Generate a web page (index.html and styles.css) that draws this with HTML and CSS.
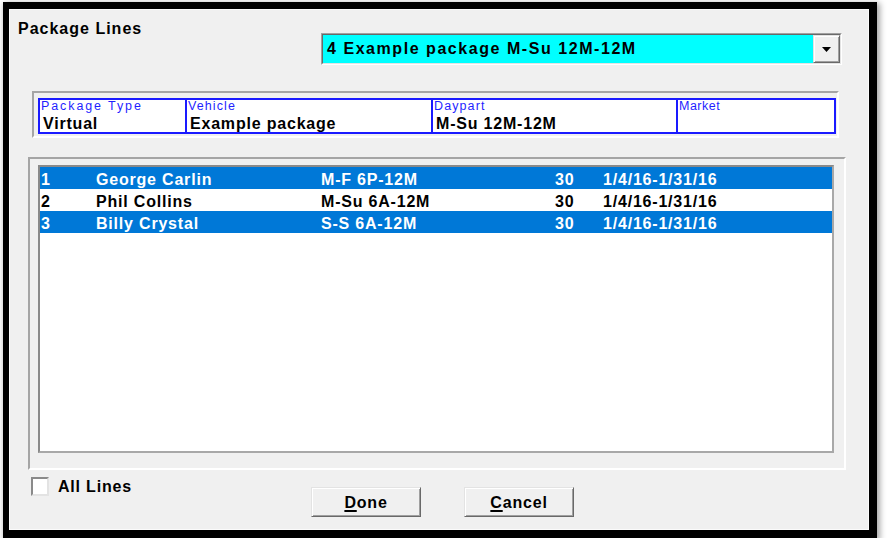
FILE: index.html
```html
<!DOCTYPE html>
<html>
<head>
<meta charset="utf-8">
<link rel="stylesheet" href="styles.css">
</head>
<body>
<div class="dialog">
  <div class="panel">
    <div class="top-row">
      <div class="title">Package Lines</div>
      <div class="combo">
        <div class="combo-inner">
          <div class="combo-text">4 Example package M-Su 12M-12M</div>
          <div class="combo-btn"><svg width="9" height="5" viewBox="0 0 9 5"><polygon points="0,0 9,0 4.5,5" fill="#000"/></svg></div>
        </div>
      </div>
    </div>
    <div class="info-frame">
      <div class="info-box">
        <div class="cell"><div class="lbl lbl-wide">Package Type</div><div class="val">Virtual</div></div>
        <div class="cell"><div class="lbl">Vehicle</div><div class="val">Example package</div></div>
        <div class="cell"><div class="lbl">Daypart</div><div class="val">M-Su 12M-12M</div></div>
        <div class="cell"><div class="lbl lbl-tight">Market</div><div class="val"></div></div>
      </div>
    </div>
    <div class="list-frame">
      <div class="list">
        <div class="row sel"><span>1</span><span>George Carlin</span><span>M-F 6P-12M</span><span>30</span><span>1/4/16-1/31/16</span></div>
        <div class="row"><span>2</span><span>Phil Collins</span><span>M-Su 6A-12M</span><span>30</span><span>1/4/16-1/31/16</span></div>
        <div class="row sel"><span>3</span><span>Billy Crystal</span><span>S-S 6A-12M</span><span>30</span><span>1/4/16-1/31/16</span></div>
      </div>
    </div>
    <div class="bottom-row">
      <div class="check"><span class="box"></span><span class="check-label">All Lines</span></div>
      <div class="buttons">
        <div class="btn"><u>D</u>one</div>
        <div class="btn"><u>C</u>ancel</div>
      </div>
    </div>
  </div>
</div>
</body>
</html>
```

FILE: styles.css
```css
html, body {
  margin: 0;
  padding: 0;
  background: #ffffff;
}

body {
  font-family: "Liberation Sans", Arial, sans-serif;
  font-weight: bold;
  font-size: 16px;
  letter-spacing: 0.8px;
  color: #000;
}

.dialog {
  box-sizing: border-box;
  width: 874px;
  height: 536px;
  margin: 2px 0 0 3px;
  border-style: solid;
  border-color: #000;
  border-width: 7px 8px 8px 6px;
  box-shadow: 2px 2px 6px 1px rgba(0, 0, 0, 0.35);
}

.panel {
  box-sizing: border-box;
  height: 100%;
  background: #f0f0f0;
  border: 1px solid #fbfbfb;
  overflow: hidden;
}

/* title + combo */
.top-row {
  display: flex;
  align-items: flex-start;
  padding-top: 10px;
}

.title {
  margin-left: 8px;
  line-height: 18px;
  letter-spacing: 1px;
}

.combo {
  margin-left: auto;
  margin-right: 26px;
  margin-top: 13px;
  width: 521px;
  height: 32px;
  box-sizing: border-box;
  border: 1px solid;
  border-color: #a0a0a0 #ffffff #ffffff #a0a0a0;
}

.combo-inner {
  height: 100%;
  box-sizing: border-box;
  border: 1px solid;
  border-color: #696969 #e3e3e3 #e3e3e3 #696969;
  display: flex;
  background: #00ffff;
}

.combo-text {
  flex: 1;
  padding-left: 4px;
  line-height: 28px;
  letter-spacing: 1.55px;
  white-space: nowrap;
}

.combo-btn {
  width: 27px;
  box-sizing: border-box;
  background: #f0f0f0;
  border: 1px solid;
  border-color: #e3e3e3 #696969 #696969 #e3e3e3;
  box-shadow: inset 1px 1px 0 #ffffff, inset -1px -1px 0 #a0a0a0;
  display: flex;
  align-items: center;
  justify-content: center;
}

.combo-btn svg {
  display: block;
}

/* info header */
.info-frame {
  margin: 26px 29px 0 22px;
  border: 2px solid;
  border-color: #a5a5a5 #ffffff #ffffff #a5a5a5;
  padding: 5px 1px 2px 4px;
}

.info-box {
  display: grid;
  grid-template-columns: 145px 246px 245px 1fr;
  border: 2px solid #1a1aff;
  background: #ffffff;
  height: 36px;
  box-sizing: border-box;
}

.cell {
  border-left: 2px solid #1a1aff;
  min-width: 0;
}

.cell:first-child {
  border-left: none;
}

.lbl {
  font-weight: normal;
  font-size: 12.5px;
  line-height: 13px;
  letter-spacing: 1.1px;
  color: #1f1fff;
  padding-left: 1px;
  white-space: nowrap;
}

.lbl-wide {
  letter-spacing: 1.9px;
}

.lbl-tight {
  letter-spacing: 0.5px;
}

.val {
  margin-top: 1px;
  padding-top: 1px;
  line-height: 17px;
  height: 17px;
  padding-left: 3px;
  white-space: nowrap;
}

/* list */
.list-frame {
  margin: 19px 22px 0 18px;
  border: 2px solid;
  border-color: #a5a5a5 #ffffff #ffffff #a5a5a5;
  padding: 6px 10px 15px 8px;
}

.list {
  height: 288px;
  box-sizing: border-box;
  border: 2px solid;
  border-color: #8a8a8a #a8a8a8 #a8a8a8 #8a8a8a;
  background: #ffffff;
}

.row {
  display: grid;
  grid-template-columns: 55px 225px 234px 48px 1fr;
  padding-left: 1px;
  height: 22px;
  box-sizing: border-box;
  padding-top: 4px;
  line-height: 18px;
  white-space: nowrap;
}

.row.sel {
  background: #0078d7;
  color: #ffffff;
}

/* bottom */
.bottom-row {
  display: grid;
  grid-template-columns: 301px auto;
  align-items: start;
  margin-top: 7px;
}

.check {
  display: flex;
  align-items: center;
  padding-left: 21px;
}

.box {
  width: 18px;
  height: 19px;
  box-sizing: border-box;
  border: 2px solid;
  border-color: #8a8a8a #e3e3e3 #e3e3e3 #8a8a8a;
  background: #ffffff;
}

.check-label {
  margin-left: 9px;
  line-height: 19px;
}

.buttons {
  display: flex;
  gap: 43px;
  margin-top: 10px;
}

.btn {
  width: 110px;
  height: 30px;
  box-sizing: border-box;
  border: 1px solid;
  border-color: #e3e3e3 #696969 #696969 #e3e3e3;
  box-shadow: inset 1px 1px 0 #ffffff, inset -1px -1px 0 #a0a0a0;
  background: #f0f0f0;
  text-align: center;
  line-height: 29px;
}

.btn u {
  text-decoration-thickness: 2px;
  text-underline-offset: 2px;
}
```
